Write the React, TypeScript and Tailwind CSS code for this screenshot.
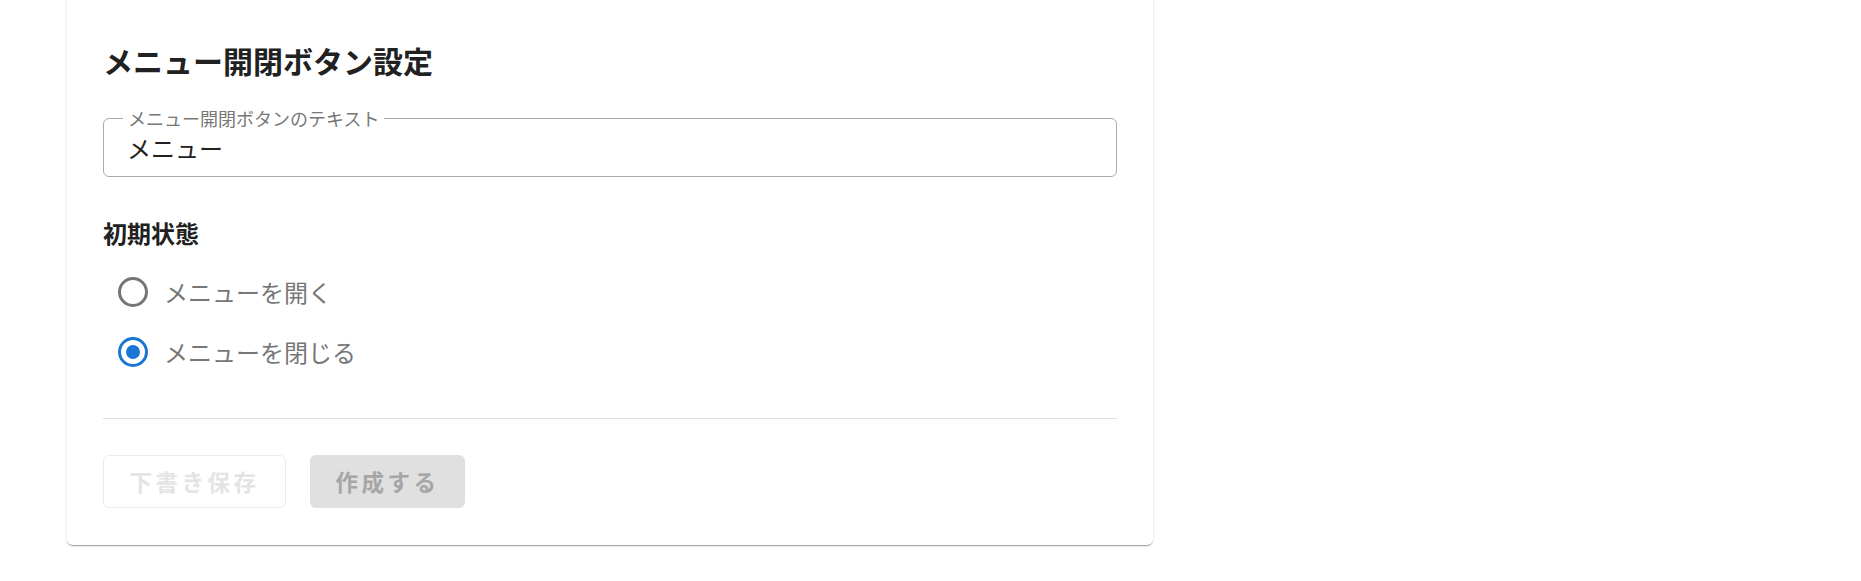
import { useState } from "react"

const font = { fontFamily: '"Noto Sans CJK JP", "Noto Sans", sans-serif' }

export default function App() {
  const [initial, setInitial] = useState<"open" | "close">("close")
  const [label, setLabel] = useState("メニュー")

  return (
    <div className="w-full h-[581px] bg-white overflow-hidden pl-[67px]" style={font}>
      <div className="w-[1086px] -mt-[10px] bg-white rounded-[6px] shadow-[0px_2px_1px_-1px_rgba(0,0,0,0.2),0px_1px_1px_0px_rgba(0,0,0,0.14),0px_1px_3px_0px_rgba(0,0,0,0.12)] px-[36px] pt-[50px] pb-[37px] flex flex-col">
        <h2 className="text-[30px] leading-[40px] font-bold text-[#212121]">メニュー開閉ボタン設定</h2>

        <div className="relative mt-[38px] h-[59px] rounded-[6px] border border-[#aaaaaa] flex items-center px-[23px]">
          <span className="absolute left-[19px] -top-[11px] bg-white px-[5px] text-[18px] leading-[20px] text-[#777777]">
            メニュー開閉ボタンのテキスト
          </span>
          <input
            value={label}
            onChange={(e) => setLabel(e.target.value)}
            className="w-full bg-transparent outline-none text-[24px] text-[#212121]"
            style={font}
          />
        </div>

        <div className="mt-[39px] text-[24px] leading-[34px] font-bold text-[#212121]">初期状態</div>

        <div className="mt-[12px] flex flex-col">
          <RadioRow label="メニューを開く" checked={initial === "open"} onClick={() => setInitial("open")} />
          <RadioRow label="メニューを閉じる" checked={initial === "close"} onClick={() => setInitial("close")} />
        </div>

        <div className="mt-[36px] h-px bg-[#e0e0e0]" />

        <div className="mt-[36px] flex gap-[24px]">
          <button
            disabled
            className="h-[53px] w-[183px] rounded-[6px] border border-[#ececec] text-[22.5px] font-bold tracking-[3.5px] text-[#e4e4e4]"
            style={font}
          >
            下書き保存
          </button>
          <button
            disabled
            className="h-[53px] w-[155px] rounded-[6px] bg-[#e0e0e0] text-[22.5px] font-bold tracking-[3.5px] text-[#a6a6a6]"
            style={font}
          >
            作成する
          </button>
        </div>
      </div>
    </div>
  )
}

function RadioRow({ label, checked, onClick }: { label: string; checked: boolean; onClick: () => void }) {
  return (
    <label className="h-[60px] flex items-center cursor-pointer" onClick={onClick}>
      <span
        className={`ml-[15px] w-[30px] h-[30px] rounded-full border-[3px] flex items-center justify-center ${
          checked ? "border-[#1976d2]" : "border-[#757575]"
        }`}
      >
        {checked && <span className="w-[14px] h-[14px] rounded-full bg-[#1976d2]" />}
      </span>
      <span className="ml-[16px] text-[24px] text-[#777777]">{label}</span>
    </label>
  )
}
